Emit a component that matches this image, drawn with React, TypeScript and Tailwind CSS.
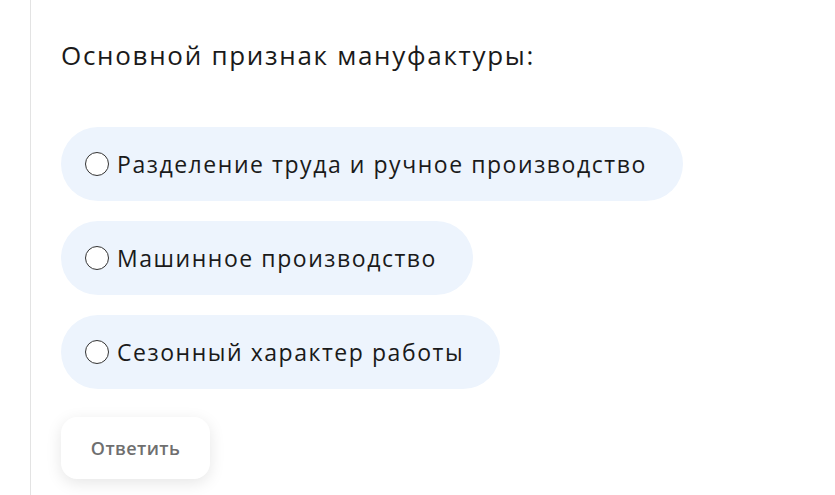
import React from 'react';

const options = [
  'Разделение труда и ручное производство',
  'Машинное производство',
  'Сезонный характер работы',
];

const App: React.FC = () => (
  <div className="h-[495px] w-[835px] overflow-hidden bg-white font-['Open_Sans',sans-serif]">
    <div className="ml-[30px] h-full border-l border-[#e3e3e3] pl-[30px] pt-[35px]">
      <h2 className="text-[26px] leading-[40px] font-normal tracking-[1.7px] text-[#1a1a1a]">
        Основной признак мануфактуры:
      </h2>
      <div className="mt-[52px] flex flex-col items-start gap-[20px]">
        {options.map((o) => (
          <label
            key={o}
            className="flex h-[74px] cursor-pointer items-center rounded-full bg-[#edf4fd] pl-[24px] pr-[36px]"
          >
            <span className="h-[24px] w-[24px] shrink-0 rounded-full border-[1.5px] border-[#333] bg-white" />
            <span className="ml-[8px] text-[23px] tracking-[1.55px] text-[#1a1a1a]">{o}</span>
          </label>
        ))}
      </div>
      <button className="mt-[28px] flex h-[62px] w-[149px] items-center justify-center rounded-[16px] bg-white text-[18px] font-semibold tracking-[0.4px] text-[#6f6f6f] shadow-[0_4px_16px_rgba(0,0,0,0.10)]">
        Ответить
      </button>
    </div>
  </div>
);

export default App;
